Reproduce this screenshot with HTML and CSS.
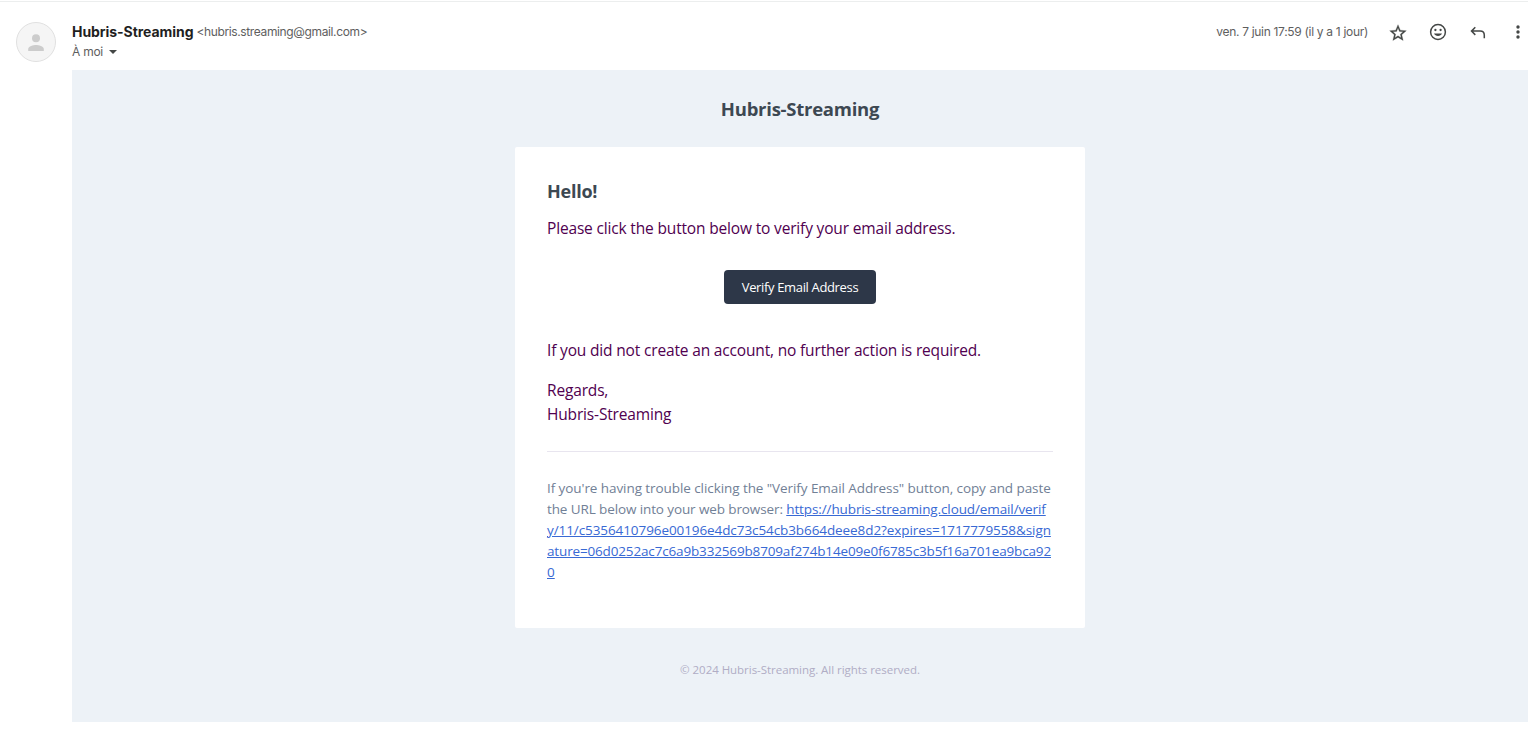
FILE: index.html
```html
<!DOCTYPE html>
<html lang="fr">
<head>
<meta charset="utf-8">
<title>Hubris-Streaming</title>
<link rel="stylesheet" href="styles.css">
</head>
<body>
<article class="message">
  <header class="head">
    <div class="avatar"><svg width="40" height="40" viewBox="0 0 40 40"><circle cx="20" cy="20" r="19.5" fill="#f5f5f5" stroke="#e0e0e0"/><circle cx="20" cy="16.200" r="4" fill="#ccc"/><path d="M12.200 29v-2c0-2.700 5.200-4 7.800-4s7.800 1.300 7.800 4v2z" fill="#ccc"/></svg></div>
    <div class="sender">
      <div class="from"><span class="name">Hubris-Streaming</span><span class="address">&lt;hubris.streaming@gmail.com&gt;</span></div>
      <div class="to"><span>À moi</span><i class="caret"></i></div>
    </div>
    <div class="tools">
      <time class="date">ven. 7 juin 17:59 (il y a 1 jour)</time>
      <svg class="icon star" viewBox="0 0 24 24"><path d="M22 9.240l-7.190-.620L12 2 9.190 8.630 2 9.240l5.460 4.730L5.820 21 12 17.270 18.180 21l-1.630-7.030L22 9.240zM12 15.400l-3.760 2.270 1-4.280-3.320-2.880 4.380-.380L12 6.100l1.710 4.040 4.380.380-3.320 2.880 1 4.280L12 15.400z"/></svg>
      <svg class="icon" viewBox="0 0 20 20"><circle cx="10" cy="10" r="7.400" fill="none" stroke="#444746" stroke-width="1.500"/><circle cx="7.400" cy="8" r="1.150"/><circle cx="12.600" cy="8" r="1.150"/><path d="M6 11.500h8c-.6 1.600-2.200 2.500-4 2.500s-3.400-.9-4-2.500z"/></svg>
      <svg class="icon" viewBox="0 0 20 20"><path d="M7.300 5.300L3.500 9.100l3.800 3.800M3.800 9.100h8.400c2.400 0 4.100 1.700 4.100 4.100v3.100" fill="none" stroke="#444746" stroke-width="1.500"/></svg>
      <svg class="icon" viewBox="0 0 20 20"><circle cx="10" cy="5" r="1.700"/><circle cx="10" cy="10" r="1.700"/><circle cx="10" cy="15" r="1.700"/></svg>
    </div>
  </header>
  <div class="mail">
    <div class="brand"><span>Hubris-Streaming</span></div>
    <section class="card">
      <h1 class="title"><span>Hello!</span></h1>
      <p class="para"><span class="intro">Please click the button below to verify your email address.</span></p>
      <a class="button"><span>Verify Email Address</span></a>
      <p class="para"><span class="notice">If you did not create an account, no further action is required.</span></p>
      <p class="para"><span>Regards,</span><br><span class="signature">Hubris-Streaming</span></p>
      <div class="subcopy">
        <div class="s1">If you're having trouble clicking the "Verify Email Address" button, copy and paste</div>
        <div class="s2">the URL below into your web browser: <a class="link">https://hubris-streaming.cloud/email/verif</a></div>
        <div class="s3"><a class="link">y/11/c5356410796e00196e4dc73c54cb3b664deee8d2?expires=1717779558&amp;sign</a></div>
        <div class="s4"><a class="link">ature=06d0252ac7c6a9b332569b8709af274b14e09e0f6785c3b5f16a701ea9bca92</a></div>
        <div><a class="link">0</a></div>
      </div>
    </section>
    <footer class="foot"><span>© 2024 Hubris-Streaming. All rights reserved.</span></footer>
  </div>
</article>
</body>
</html>
```
FILE: styles.css
```css
* { box-sizing: border-box; }
body { margin: 0; background: #fff; font-family: "Open Sans", "Noto Sans", sans-serif; overflow: hidden; }
.message { width: 1528px; border-top: 1px solid #fff; }
.head { display: flex; height: 69px; padding: 20px 0 0 16px; border-top: 1px solid #eceeee; font-family: Inter, Roboto, sans-serif; font-size: 12px; color: #5e5e5e; white-space: nowrap; }
.avatar, .avatar svg { width: 40px; height: 40px; display: block; }
.sender { margin-left: 16px; flex: 1; }
.from { height: 20px; line-height: 20px; display: flex; gap: 3px; }
.name { font-size: 14px; font-weight: 700; color: #1f1f1f; letter-spacing: -.06px; }
.address { letter-spacing: -.37px; }
.to { height: 20px; line-height: 20px; display: flex; align-items: center; gap: 6px; letter-spacing: -.25px; }
.caret { border: 4px solid transparent; border-top-color: #444746; border-bottom: 0; }
.tools { display: flex; height: 20px; align-items: center; gap: 20px; }
.date { line-height: 20px; letter-spacing: -.31px; }
.icon { width: 20px; height: 20px; fill: #444746; }
.star { margin-top: 1px; stroke: #444746; stroke-width: .3; }
.mail { margin-left: 72px; height: 652px; background: #edf2f7; display: flex; flex-direction: column; align-items: center; }
.brand { height: 77px; padding-top: 25px; line-height: 28px; font-size: 18.500px; font-weight: 700; color: #3d4852; letter-spacing: -.25px; }
.card { width: 570px; height: 481px; background: #fff; border-radius: 2px; padding: 32px; display: flex; flex-direction: column; white-space: nowrap; }
.title { margin: 0 0 12px; font-size: 18px; line-height: 25px; font-weight: 700; color: #3d4852; letter-spacing: -.25px; }
.para { margin: 0 0 16px; font-size: 15.500px; line-height: 24px; color: #500050; letter-spacing: -.165px; }
.button { align-self: center; width: 152px; height: 34px; margin: 14px 0 34px; border-radius: 4px; background: #2d3748; color: #fff; font-size: 13px; line-height: 35px; text-align: center; letter-spacing: -.35px; }
.subcopy { margin-top: 9px; padding-top: 26px; border-top: 1px solid #e8e5ef; font-size: 13.500px; line-height: 21px; color: #718096; }
.s1 { letter-spacing: -.075px; }
.s2 { letter-spacing: -.11px; }
.s3 { letter-spacing: -.085px; }
.s4 { letter-spacing: -.155px; }
.link { color: #3869d4; text-decoration: underline; }
.foot { padding-top: 32px; font-size: 11.500px; line-height: 20px; color: #b0adc5; letter-spacing: -.04px; }
```
